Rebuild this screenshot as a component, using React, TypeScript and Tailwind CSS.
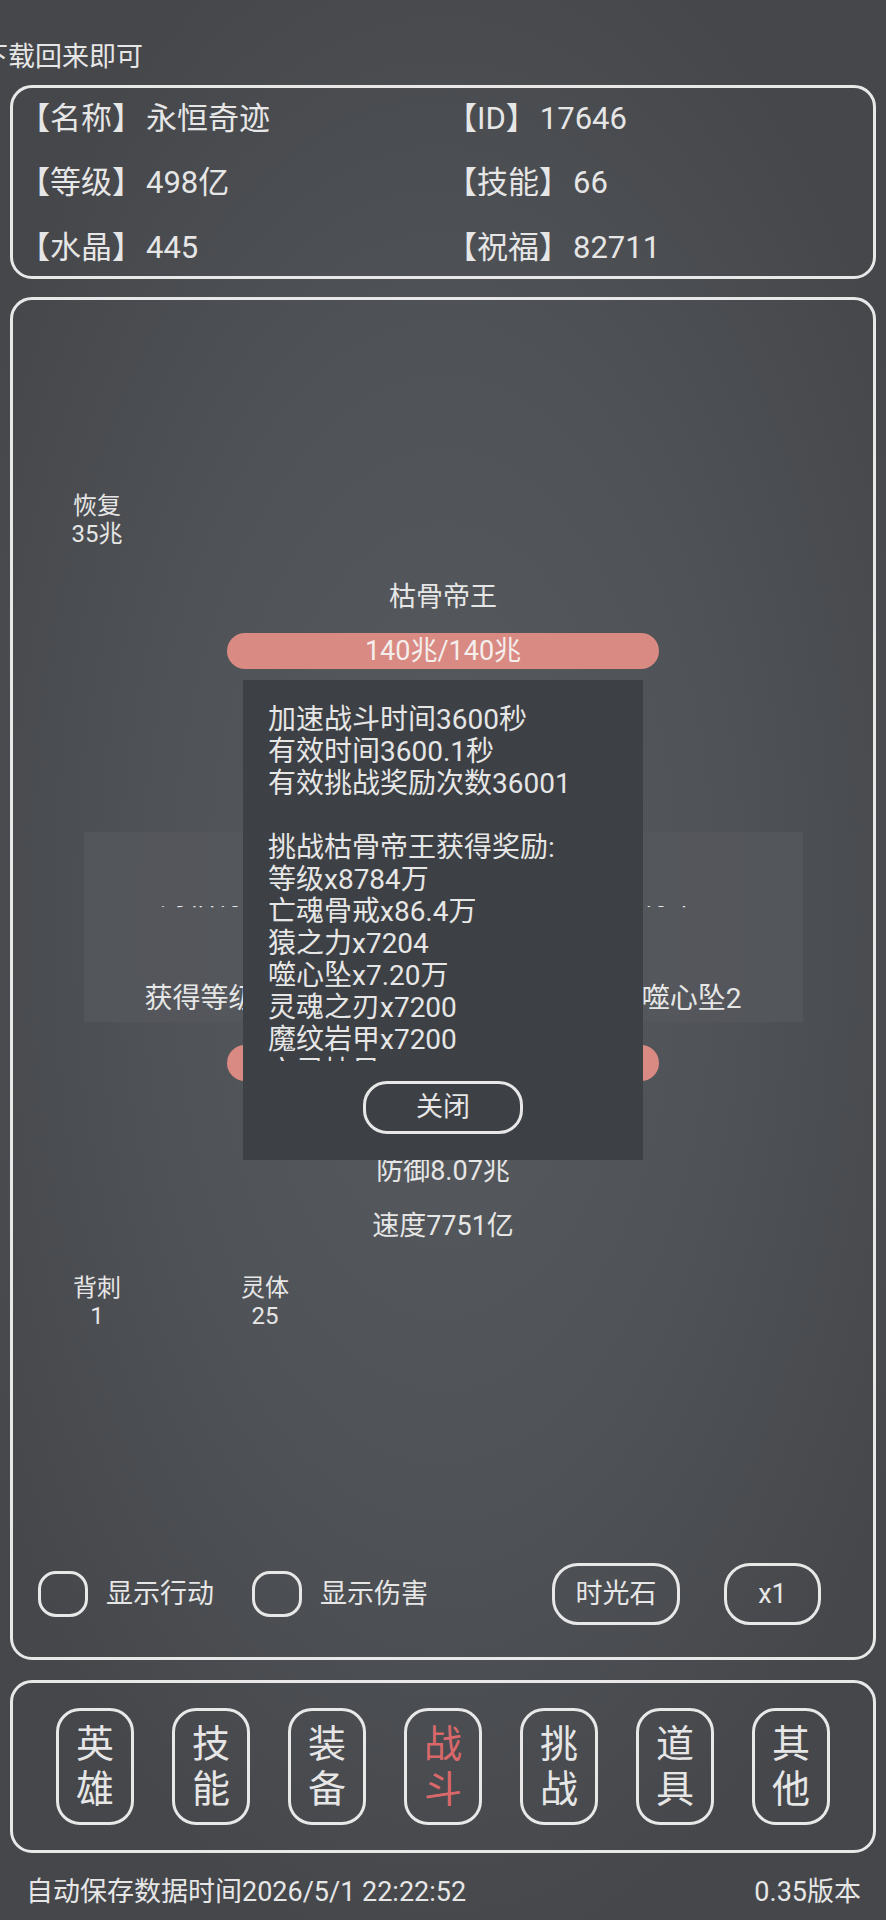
import React from "react";

const infoRows = [
  [
    { label: "【名称】", value: "永恒奇迹" },
    { label: "【ID】", value: "17646" },
  ],
  [
    { label: "【等级】", value: "498亿" },
    { label: "【技能】", value: "66" },
  ],
  [
    { label: "【水晶】", value: "445" },
    { label: "【祝福】", value: "82711" },
  ],
];

const rewardLines = [
  "加速战斗时间3600秒",
  "有效时间3600.1秒",
  "有效挑战奖励次数36001",
  "",
  "挑战枯骨帝王获得奖励:",
  "等级x8784万",
  "亡魂骨戒x86.4万",
  "猿之力x7204",
  "噬心坠x7.20万",
  "灵魂之刃x7200",
  "魔纹岩甲x7200",
  "亡灵披风x7200",
];

const navItems = [
  ["英", "雄"],
  ["技", "能"],
  ["装", "备"],
  ["战", "斗"],
  ["挑", "战"],
  ["道", "具"],
  ["其", "他"],
];

function Buff({ name, value }: { name: string; value: string }) {
  return (
    <div className="w-[168px] text-center text-[24px] leading-[28px]">
      <div>{name}</div>
      <div>{value}</div>
    </div>
  );
}

function HpBar({ text }: { text?: string }) {
  return (
    <div className="mx-auto w-[432px] h-[36px] rounded-full bg-[#d98a82] flex items-center justify-center text-[27px] leading-[36px] text-[#f4eeec]">
      {text}
    </div>
  );
}

export default function App() {
  return (
    <div
      className="relative w-full min-h-[1920px] overflow-hidden px-[10px] text-[#e6e6e6] bg-[radial-gradient(ellipse_60%_55%_at_50%_48%,#575a5e_0%,#4f5256_55%,#45474b_100%)]"
      style={{ fontFamily: 'Roboto, "Noto Sans CJK SC", sans-serif' }}
    >
      {/* Top notice, scrolled off to the left */}
      <div className="h-[85px] pt-[40px]">
        <div className="ml-[-29px] whitespace-nowrap text-[27px] leading-[34px]">
          下载回来即可
        </div>
      </div>

      {/* Player info */}
      <div className="h-[194px] rounded-[22px] border-[3px] border-[#e8e8e8] pl-[6px]">
        <div className="grid grid-cols-2 grid-rows-[61px_68px_62px]">
          {infoRows.flat().map((item) => (
            <div
              key={item.label}
              className="flex items-center whitespace-nowrap text-[31px] leading-[36px]"
            >
              <span>{item.label}</span>
              <span className="ml-[3px]">{item.value}</span>
            </div>
          ))}
        </div>
      </div>

      {/* Battle panel */}
      <div className="mt-[18px] h-[1363px] rounded-[22px] border-[3px] border-[#e8e8e8] flex flex-col">
        <div className="h-[192px]" />
        <div className="flex">
          <Buff name="恢复" value="35兆" />
        </div>

        <div className="mt-[32px] text-center text-[27px] leading-[34px]">
          枯骨帝王
        </div>
        <div className="mt-[19px]">
          <HpBar text="140兆/140兆" />
        </div>

        {/* Battle log */}
        <div className="mx-auto mt-[163px] w-[719px] h-[190px] bg-[#55585c]/80 overflow-hidden">
          <div className="mt-[74px] h-[2px] overflow-hidden">
            <div className="mx-auto mt-[-27px] w-[566px] flex justify-between whitespace-nowrap text-[28px] leading-[34px]">
              <span>对枯骨帝王造成伤害x3兆</span>
              <span>击败枯骨帝王</span>
            </div>
          </div>
          <div className="mx-auto mt-[74px] w-[597px] flex justify-between whitespace-nowrap text-[28px] leading-[34px]">
            <span>获得等级x2440万</span>
            <span>噬心坠2</span>
          </div>
        </div>

        <div className="mt-[23px]">
          <HpBar />
        </div>
        <div className="mt-[8px] text-center text-[27px] leading-[55px]">
          <div>攻击6.21兆</div>
          <div>防御8.07兆</div>
          <div>速度7751亿</div>
        </div>

        <div className="mt-[20px] flex">
          <Buff name="背刺" value="1" />
          <Buff name="灵体" value="25" />
        </div>

        {/* Options row */}
        <div className="mt-auto mb-[32px] flex items-center pl-[25px] pr-[52px] text-[27px] leading-[34px]">
          <div className="w-[50px] h-[46px] rounded-[18px] border-[3px] border-[#e8e8e8]" />
          <span className="ml-[18px]">显示行动</span>
          <div className="ml-[38px] w-[50px] h-[46px] rounded-[18px] border-[3px] border-[#e8e8e8]" />
          <span className="ml-[18px]">显示伤害</span>
          <button className="ml-auto w-[128px] h-[62px] rounded-[26px] border-[3px] border-[#e8e8e8] text-[27px]">
            时光石
          </button>
          <button className="ml-[44px] w-[97px] h-[62px] rounded-[26px] border-[3px] border-[#e8e8e8] text-[27px]">
            x1
          </button>
        </div>
      </div>

      {/* Bottom nav */}
      <div className="mt-[20px] h-[173px] rounded-[22px] border-[3px] border-[#e8e8e8] pt-[25px] flex justify-center gap-[38px]">
        {navItems.map(([a, b]) => (
          <button
            key={a + b}
            className={`w-[78px] h-[117px] rounded-[24px] border-[3px] border-[#e8e8e8] flex flex-col items-center justify-center text-[38px] leading-[45px] ${
              a === "战" ? "text-[#d9686a]" : "text-[#e6e6e6]"
            }`}
          >
            <span>{a}</span>
            <span>{b}</span>
          </button>
        ))}
      </div>

      {/* Footer */}
      <div className="mt-[22px] flex justify-between pl-[16px] pr-[15px] text-[27px] leading-[34px]">
        <span>自动保存数据时间2026/5/1 22:22:52</span>
        <span>0.35版本</span>
      </div>

      {/* Reward dialog */}
      <div className="absolute left-[243px] top-[680px] w-[400px] h-[480px] bg-[#3d4044] flex flex-col">
        <div className="mt-[24px] h-[357px] overflow-hidden pl-[25px] text-[28px] leading-[32px]">
          {rewardLines.map((line, i) => (
            <div key={i} className="h-[32px] whitespace-nowrap">
              {line}
            </div>
          ))}
        </div>
        <button className="mx-auto mt-[20px] w-[160px] h-[53px] rounded-[24px] border-[3px] border-[#e8e8e8] text-[27px]">
          关闭
        </button>
      </div>
    </div>
  );
}
